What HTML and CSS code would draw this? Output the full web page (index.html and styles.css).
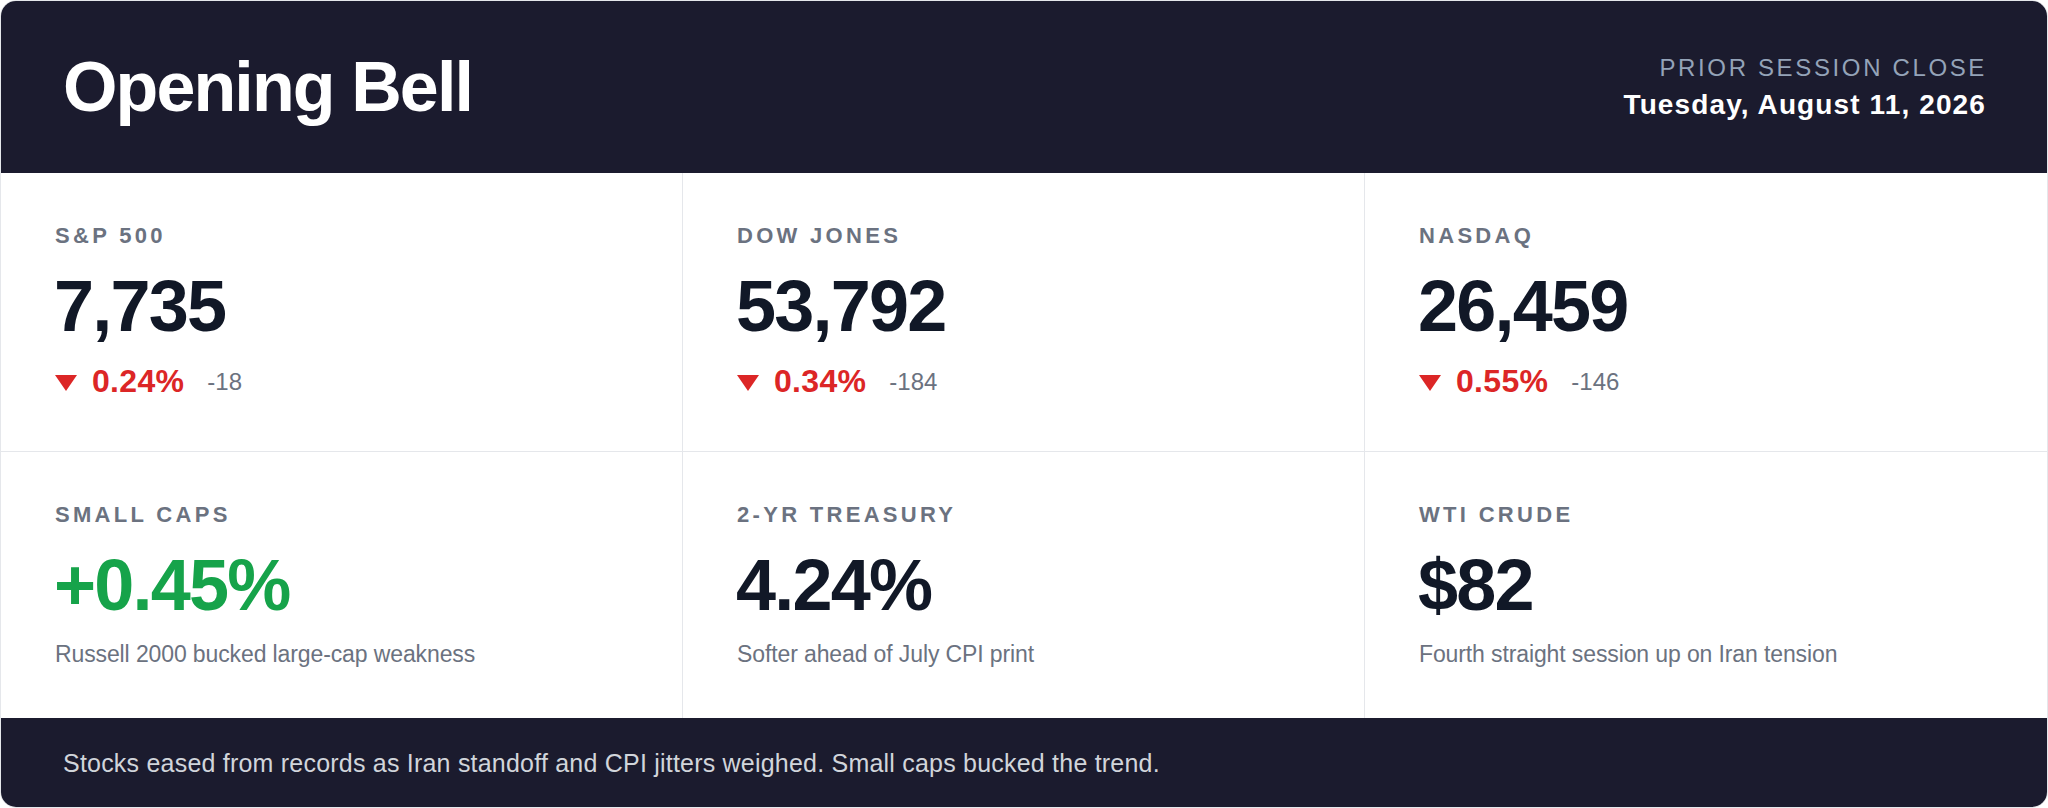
FILE: index.html
```html
<!DOCTYPE html>
<html lang="en">
<head>
<meta charset="utf-8">
<title>Opening Bell</title>
<link rel="stylesheet" href="styles.css">
</head>
<body>
<div class="card">
  <header class="head">
    <h1 class="title">Opening Bell</h1>
    <div class="session">
      <div class="session-label">PRIOR SESSION CLOSE</div>
      <div class="session-date">Tuesday, August 11, 2026</div>
    </div>
  </header>
  <main class="grid">
    <section class="cell">
      <div class="label">S&amp;P 500</div>
      <div class="value">7,735</div>
      <div class="change"><span class="tri"></span><span class="pct">0.24%</span><span class="pts">-18</span></div>
    </section>
    <section class="cell">
      <div class="label">DOW JONES</div>
      <div class="value">53,792</div>
      <div class="change"><span class="tri"></span><span class="pct">0.34%</span><span class="pts">-184</span></div>
    </section>
    <section class="cell last">
      <div class="label">NASDAQ</div>
      <div class="value">26,459</div>
      <div class="change"><span class="tri"></span><span class="pct">0.55%</span><span class="pts">-146</span></div>
    </section>
    <section class="cell row2">
      <div class="label">SMALL CAPS</div>
      <div class="value up">+0.45%</div>
      <div class="desc">Russell 2000 bucked large-cap weakness</div>
    </section>
    <section class="cell row2">
      <div class="label">2-YR TREASURY</div>
      <div class="value">4.24%</div>
      <div class="desc">Softer ahead of July CPI print</div>
    </section>
    <section class="cell row2 last">
      <div class="label">WTI CRUDE</div>
      <div class="value">$82</div>
      <div class="desc">Fourth straight session up on Iran tension</div>
    </section>
  </main>
  <footer class="foot">Stocks eased from records as Iran standoff and CPI jitters weighed. Small caps bucked the trend.</footer>
</div>
</body>
</html>
```

FILE: styles.css
```css
* { box-sizing: border-box; }
html, body { margin: 0; padding: 0; background: #ffffff; }
body {
  font-family: "Liberation Sans", Arial, sans-serif;
  width: 2048px;
  height: 808px;
}
.card {
  width: 2048px;
  height: 808px;
  border: 1px solid #e5e7eb;
  border-radius: 16px;
  overflow: hidden;
  display: flex;
  flex-direction: column;
  background: #ffffff;
}
.head {
  background: #1b1b2e;
  height: 172px;
  flex: none;
  display: flex;
  align-items: center;
  justify-content: space-between;
  padding: 0 62px;
}
.title {
  margin: 0;
  color: #ffffff;
  font-size: 70px;
  line-height: 70px;
  font-weight: 700;
  letter-spacing: -0.027em;
}
.session { text-align: right; }
.session-label {
  color: #94a3b8;
  font-size: 24px;
  line-height: 30px;
  letter-spacing: 0.11em;
  margin-right: -2px;
}
.session-date {
  color: #ffffff;
  font-size: 28px;
  line-height: 34px;
  font-weight: 700;
  letter-spacing: 0.04em;
  margin-top: 5px;
  margin-right: -1px;
}
.grid {
  display: grid;
  grid-template-columns: 1fr 1fr 1fr;
  flex: 1;
}
.cell {
  border-bottom: 1px solid #e5e7eb;
  border-right: 1px solid #e5e7eb;
  padding: 50px 54px 49px 54px;
}
.cell.last { border-right: none; }
.cell.row2 { border-bottom: none; padding-top: 50px; }
.label {
  color: #6b7280;
  font-size: 22px;
  line-height: 26px;
  font-weight: 700;
  letter-spacing: 0.15em;
}
.value {
  color: #111827;
  font-size: 72px;
  line-height: 72px;
  font-weight: 700;
  letter-spacing: -0.025em;
  margin-top: 21px;
  margin-left: -1px;
}
.value.up { color: #16a34a; }
.change {
  display: flex;
  align-items: center;
  height: 40px;
  margin-top: 19px;
}
.tri {
  width: 0;
  height: 0;
  border-left: 11px solid transparent;
  border-right: 11px solid transparent;
  border-top: 16px solid #dc2626;
  margin-right: 15px;
  margin-top: 3px;
}
.pct {
  color: #dc2626;
  font-size: 32px;
  font-weight: 700;
  line-height: 36px;
  letter-spacing: 0.01em;
}
.pts {
  color: #6b7280;
  font-size: 24px;
  line-height: 36px;
  margin-left: 23px;
  margin-top: 2px;
}
.desc {
  color: #6b7280;
  font-size: 23px;
  line-height: 28px;
  letter-spacing: -0.005em;
  margin-top: 19px;
}
.foot {
  background: #1b1b2e;
  color: #d1d5db;
  font-size: 25px;
  line-height: 28px;
  letter-spacing: 0.0085em;
  height: 89px;
  flex: none;
  display: flex;
  align-items: center;
  padding: 0 62px;
}
```
